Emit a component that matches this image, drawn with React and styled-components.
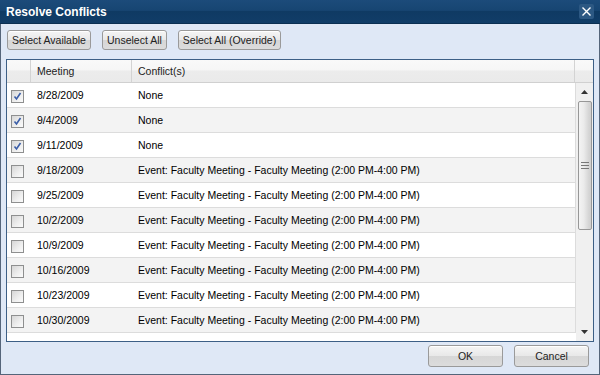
import React from 'react';
import styled, { createGlobalStyle } from 'styled-components';

const Global = createGlobalStyle`
    html, body { margin: 0; padding: 0; }
    body {
        font-family: "Liberation Sans", Arial, sans-serif;
        font-size: 10.5px;
        color: #000;
        background: #dfe8f6;
    }
`;

const dates = [
    '8/28/2009', '9/4/2009', '9/11/2009', '9/18/2009', '9/25/2009',
    '10/2/2009', '10/9/2009', '10/16/2009', '10/23/2009', '10/30/2009',
];
const EVENT = 'Event: Faculty Meeting - Faculty Meeting (2:00 PM-4:00 PM)';
const rows = dates.map((d, i) => ({
    date: d,
    checked: i < 3,
    conflict: i < 3 ? 'None' : EVENT,
}));

const Dialog = styled.div`
    width: 600px;
    height: 375px;
    box-sizing: border-box;
    border: 1px solid #55657a;
    border-top: none;
    display: flex;
    flex-direction: column;
    background: #dfe8f6;
`;

const TitleBar = styled.div`
    height: 24px;
    box-sizing: border-box;
    background: linear-gradient(#1c4b7a 0%, #174572 45%, #0f3a63 50%, #113d68 100%);
    border-bottom: 1px solid #0b2f52;
    display: flex;
    align-items: center;
    justify-content: space-between;
    padding: 0 6px 0 6px;
    margin: 0 -1px;
`;

const Title = styled.span`
    color: #fff;
    font-weight: bold;
    font-size: 12px;
    font-family: "Liberation Sans", Arial, sans-serif;
`;

const CloseBtn = styled.div`
    width: 15px;
    height: 15px;
    background: #2c5883;
    border-radius: 2px;
    display: flex;
    align-items: center;
    justify-content: center;
`;

const Body = styled.div`
    flex: 1;
    display: flex;
    flex-direction: column;
    padding: 0 5px;
`;

const Toolbar = styled.div`
    display: flex;
    gap: 11px;
    margin-top: 6px;
    padding-left: 1px;
`;

const Button = styled.button`
    height: ${p => p.$h || 20}px;
    width: ${p => (p.$w ? p.$w + 'px' : 'auto')};
    padding: 0 4px;
    font-family: "Liberation Sans", Arial, sans-serif;
    font-size: 10.5px;
    color: #222;
    border: 1px solid #9a9a9a;
    border-radius: 3px;
    background: linear-gradient(#f5f5f5 0%, #e8e8e8 50%, #d6d6d6 51%, #dcdcdc 100%);
    box-shadow: inset 0 1px 0 #fff;
    cursor: pointer;
`;

const Grid = styled.div`
    margin-top: 9px;
    height: 283px;
    box-sizing: border-box;
    border: 1px solid #3d5f86;
    background: #fff;
    display: flex;
    flex-direction: column;
    overflow: hidden;
`;

const Header = styled.div`
    display: flex;
    height: 23px;
    box-sizing: border-box;
    border-bottom: 1px solid #d0d0d0;
    background: linear-gradient(#f9f9f9 0%, #f6f6f6 45%, #ececec 50%, #eaeaea 100%);
    flex-shrink: 0;
`;

const HeadCell = styled.div`
    width: ${p => (p.$w ? p.$w + 'px' : 'auto')};
    flex: ${p => (p.$w ? 'none' : 1)};
    border-right: ${p => (p.$last ? 'none' : '1px solid #d3d3d3')};
    padding-left: 6px;
    box-sizing: border-box;
    display: flex;
    align-items: center;
    color: #222;
`;

const GridBody = styled.div`
    flex: 1;
    display: flex;
    overflow: hidden;
`;

const Rows = styled.div`
    flex: 1;
    overflow: hidden;
`;

const Row = styled.div`
    display: flex;
    height: 25px;
    box-sizing: border-box;
    border-bottom: 1px solid #dcdcdc;
    border-right: 1px solid #dcdcdc;
    background: ${p => (p.$alt ? '#f3f3f3' : '#fff')};
    align-items: center;
`;

const Cell = styled.div`
    width: ${p => (p.$w ? p.$w + 'px' : 'auto')};
    flex: ${p => (p.$w ? 'none' : 1)};
    padding-left: ${p => p.$pl ?? 6}px;
    box-sizing: border-box;
    white-space: nowrap;
`;

const Box = styled.div`
    width: 13px;
    height: 13px;
    box-sizing: border-box;
    border: 1px solid #8e8f8f;
    background: linear-gradient(135deg, #d6d6d6 0%, #efefef 60%, #fbfbfb 100%);
    display: flex;
    align-items: center;
    justify-content: center;
    margin-top: 2px;
`;

const ScrollBar = styled.div`
    width: 17px;
    background: #f0f0f0;
    display: flex;
    flex-direction: column;
    align-items: center;
    padding: 0 1px;
    box-sizing: border-box;
`;

const Arrow = styled.div`
    height: 18px;
    display: flex;
    align-items: center;
    justify-content: center;
`;

const Thumb = styled.div`
    width: 14px;
    height: 129px;
    box-sizing: border-box;
    border: 1px solid #979797;
    border-radius: 2px;
    background: linear-gradient(90deg, #f3f3f3 0%, #ebebeb 40%, #d6d6d6 80%, #cfcfcf 100%);
    display: flex;
    align-items: center;
    justify-content: center;
`;

const Track = styled.div`
    flex: 1;
`;

const Footer = styled.div`
    display: flex;
    justify-content: flex-end;
    gap: 11px;
    margin-top: 3px;
    padding-right: 5px;
`;

const Check = ({ checked }) => (
    <Box>
        {checked && (
            <svg width="9" height="9" viewBox="0 0 9 9">
                <path d="M1.5 4.5 L3.5 7 L7.5 1" fill="none" stroke="#3b5ea8" strokeWidth="1.6" />
            </svg>
        )}
    </Box>
);

const Tri = ({ down }) => (
    <svg width="7" height="4" viewBox="0 0 7 4">
        <path d={down ? 'M0 0 H7 L3.5 4 Z' : 'M0 4 H7 L3.5 0 Z'} fill="#333" />
    </svg>
);

export default function App() {
    return (
        <>
            <Global />
            <Dialog>
                <TitleBar>
                    <Title>Resolve Conflicts</Title>
                    <CloseBtn>
                        <svg width="9" height="9" viewBox="0 0 9 9">
                            <path d="M0.5 0.5 L8.5 8.5 M8.5 0.5 L0.5 8.5" stroke="#fff" strokeWidth="1.4" />
                        </svg>
                    </CloseBtn>
                </TitleBar>
                <Body>
                    <Toolbar>
                        <Button>Select Available</Button>
                        <Button>Unselect All</Button>
                        <Button>Select All (Override)</Button>
                    </Toolbar>
                    <Grid>
                        <Header>
                            <HeadCell $w={24} />
                            <HeadCell $w={101}>Meeting</HeadCell>
                            <HeadCell>Conflict(s)</HeadCell>
                            <HeadCell $w={18} $last />
                        </Header>
                        <GridBody>
                            <Rows>
                                {rows.map((r, i) => (
                                    <Row key={r.date} $alt={i % 2 === 1}>
                                        <Cell $w={24} $pl={4}>
                                            <Check checked={r.checked} />
                                        </Cell>
                                        <Cell $w={101}>{r.date}</Cell>
                                        <Cell>{r.conflict}</Cell>
                                    </Row>
                                ))}
                            </Rows>
                            <ScrollBar>
                                <Arrow><Tri /></Arrow>
                                <Thumb>
                                    <svg width="8" height="7" viewBox="0 0 8 7">
                                        <path d="M0 0.5 H8 M0 3.5 H8 M0 6.5 H8" stroke="#777" />
                                    </svg>
                                </Thumb>
                                <Track />
                                <Arrow><Tri down /></Arrow>
                            </ScrollBar>
                        </GridBody>
                    </Grid>
                    <Footer>
                        <Button $w={75} $h={22}>OK</Button>
                        <Button $w={75} $h={22}>Cancel</Button>
                    </Footer>
                </Body>
            </Dialog>
        </>
    );
}
